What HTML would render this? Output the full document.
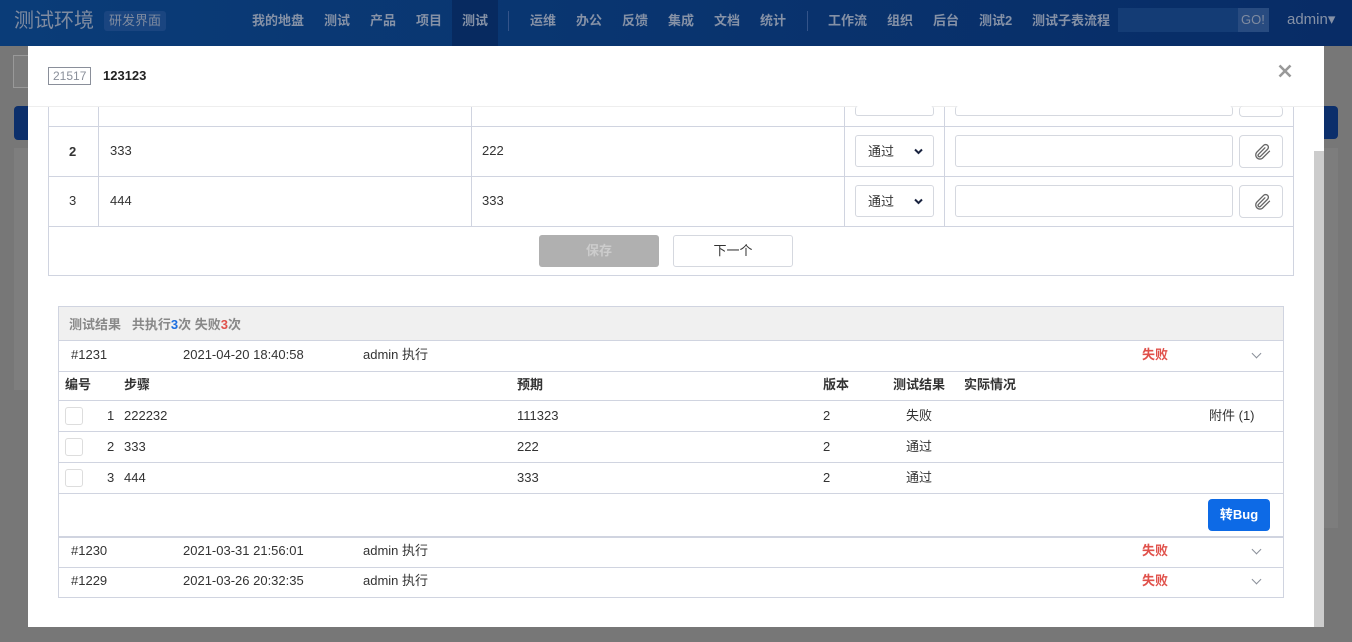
<!DOCTYPE html>
<html style="background:#777"><head><meta charset="utf-8"><style>
*{box-sizing:border-box;margin:0;padding:0}
html,body{width:1352px;height:642px;overflow:hidden;background:#777}
body{font-family:"Liberation Sans","Noto Sans CJK SC",sans-serif;font-size:13px;color:#333;position:relative}
.a{position:absolute}
.bg{left:0;top:0;width:1352px;height:642px;background:#777}
.nav{left:0;top:0;width:1352px;height:46px;background:linear-gradient(90deg,#0a3c78,#082c66)}
.nav span{position:absolute;top:13px;color:#8591a6;font-weight:bold;font-size:13px;line-height:16px}
.modal{left:28px;top:46px;width:1296px;height:581px;background:#fff;overflow:hidden}
.bd{border:1px solid #d0d4e0}
.sel{background:#fff;border:1px solid #d5d8df;border-radius:3px;height:32px;width:79px;font-size:13px;padding:8px 12px;line-height:16px}
.ta{background:#fff;border:1px solid #d5d8df;border-radius:3px;height:32px;width:278px}
.clip{border:1px solid #d5d8df;border-radius:4px;width:44px;height:33px}
.t{position:absolute;font-size:13px;color:#333;line-height:16px}
.hl{position:absolute;left:0;width:1225px;height:1px;background:#d0d4e0}
.cb{position:absolute;left:6px;width:18px;height:18px;border:1.5px solid #ddd;border-radius:3px}
.fail{color:#e0504a;font-weight:bold}
.chev{position:absolute;left:1194px;width:7px;height:7px;border-right:1.5px solid #8a8f99;border-bottom:1.5px solid #8a8f99;transform:rotate(45deg)}
</style></head><body>
<div class="a bg"></div>
<div class="a nav">
<span style="left:14px;top:9px;font-size:20px;line-height:24px;font-weight:normal;color:#7f8ba0">测试环境</span>
<span style="left:104px;top:11px;font-size:13px;font-weight:normal;background:#1a4580;padding:2px 5px;border-radius:3px;color:#7f8ba0">研发界面</span>
<div class="a" style="left:452px;top:0;width:46px;height:46px;background:#072a60"></div>
<span style="left:252px">我的地盘</span><span style="left:324px">测试</span><span style="left:370px">产品</span><span style="left:416px">项目</span><span style="left:462px">测试</span>
<div class="a" style="left:508px;top:11px;width:1px;height:20px;background:#34548a"></div>
<span style="left:530px">运维</span><span style="left:576px">办公</span><span style="left:622px">反馈</span><span style="left:668px">集成</span><span style="left:714px">文档</span><span style="left:760px">统计</span>
<div class="a" style="left:807px;top:11px;width:1px;height:20px;background:#34548a"></div>
<span style="left:828px">工作流</span><span style="left:887px">组织</span><span style="left:933px">后台</span><span style="left:979px">测试2</span><span style="left:1032px">测试子表流程</span>
<div class="a" style="left:1118px;top:8px;width:120px;height:24px;background:#143c75"></div>
<div class="a" style="left:1238px;top:8px;width:31px;height:24px;background:#284b80;color:#7f8ba0;font-size:13px;padding:5px 3px;line-height:14px">GO!</div>
<span style="left:1287px;top:12px;font-weight:normal;font-size:15px">admin▾</span>
</div>
<div class="a" style="left:13px;top:55px;width:15px;height:33px;border:1px solid #999;border-right:none;background:#7c7c7c"></div>
<div class="a" style="left:14px;top:106px;width:14px;height:34px;background:#0c2f6b;border-radius:4px 0 0 4px"></div>
<div class="a" style="left:14px;top:148px;width:14px;height:242px;background:#7e7e7e"></div>
<div class="a" style="left:1324px;top:106px;width:14px;height:33px;background:#0c2f6b;border-radius:0 4px 4px 0"></div>
<div class="a" style="left:1324px;top:148px;width:14px;height:380px;background:#7d7d7d"></div>
<div class="a modal">
<!-- steps table -->
<div class="a bd" style="left:20px;top:50px;width:1246px;height:180px;border-top:none"></div>
<div class="a" style="left:20px;top:80px;width:1246px;height:1px;background:#d0d4e0"></div>
<div class="a" style="left:20px;top:130px;width:1246px;height:1px;background:#d0d4e0"></div>
<div class="a" style="left:20px;top:180px;width:1246px;height:1px;background:#d0d4e0"></div>
<div class="a" style="left:70px;top:60px;width:1px;height:120px;background:#d0d4e0"></div>
<div class="a" style="left:443px;top:60px;width:1px;height:120px;background:#d0d4e0"></div>
<div class="a" style="left:816px;top:60px;width:1px;height:120px;background:#d0d4e0"></div>
<div class="a" style="left:916px;top:60px;width:1px;height:120px;background:#d0d4e0"></div>
<div class="a" style="left:0;top:0;width:1296px;height:60px;background:#fff"></div>
<div class="a" style="left:20px;top:21px;border:1px solid #8a8f9a;color:#8a8f9a;font-size:12px;padding:1px 4px;line-height:14px">21517</div>
<div class="a" style="left:75px;top:22px;font-weight:bold;color:#222;font-size:13px;line-height:16px">123123</div>
<svg class="a" style="left:1250px;top:18px" width="14" height="14" viewBox="0 0 14 14"><path d="M1.5 1.5L12.5 12.5M12.5 1.5L1.5 12.5" stroke="#999" stroke-width="2.6"/></svg>
<div class="a" style="left:0;top:60px;width:1296px;height:1px;background:#eee"></div>
<div class="a sel" style="left:827px;top:60px;height:10px;border-top:none;padding:0"></div>
<div class="a ta" style="left:927px;top:60px;height:10px;border-top:none"></div>
<div class="a clip" style="left:1211px;top:60px;height:11px;border-top:none"></div>
<div class="t" style="left:41px;top:98px;font-weight:bold">2</div>
<div class="t" style="left:82px;top:97px">333</div><div class="t" style="left:454px;top:97px">222</div>
<div class="a sel" style="left:827px;top:89px">通过<svg style="position:absolute;right:10px;top:12px" width="9" height="7" viewBox="0 0 9 7"><path d="M1 1.5L4.5 5L8 1.5" fill="none" stroke="#1a2440" stroke-width="2"/></svg></div>
<div class="a ta" style="left:927px;top:89px"></div>
<div class="a clip" style="left:1211px;top:89px"><svg style="position:absolute;left:12px;top:6px" width="20" height="20" viewBox="0 0 24 24"><path d="M21 11l-8.5 8.5a5 5 0 0 1-7-7L14 4a3.3 3.3 0 0 1 4.7 4.7l-8.6 8.6a1.7 1.7 0 0 1-2.4-2.4L15.5 7" fill="none" stroke="#666" stroke-width="1.6" stroke-linecap="round"/></svg></div>
<div class="t" style="left:41px;top:147px">3</div>
<div class="t" style="left:82px;top:147px">444</div><div class="t" style="left:454px;top:147px">333</div>
<div class="a sel" style="left:827px;top:139px">通过<svg style="position:absolute;right:10px;top:12px" width="9" height="7" viewBox="0 0 9 7"><path d="M1 1.5L4.5 5L8 1.5" fill="none" stroke="#1a2440" stroke-width="2"/></svg></div>
<div class="a ta" style="left:927px;top:139px"></div>
<div class="a clip" style="left:1211px;top:139px"><svg style="position:absolute;left:12px;top:6px" width="20" height="20" viewBox="0 0 24 24"><path d="M21 11l-8.5 8.5a5 5 0 0 1-7-7L14 4a3.3 3.3 0 0 1 4.7 4.7l-8.6 8.6a1.7 1.7 0 0 1-2.4-2.4L15.5 7" fill="none" stroke="#666" stroke-width="1.6" stroke-linecap="round"/></svg></div>
<div class="a" style="left:511px;top:189px;width:120px;height:32px;background:#b0b0b0;border-radius:3px;color:#ccc;font-weight:bold;text-align:center;line-height:32px">保存</div>
<div class="a" style="left:645px;top:189px;width:120px;height:32px;border:1px solid #d5d8df;border-radius:3px;text-align:center;line-height:30px">下一个</div>
<!-- results -->
<div class="a bd" style="left:30px;top:260px;width:1226px;height:292px">
<div class="a" style="left:0;top:0;width:1224px;height:34px;background:#f0f0f0;border-bottom:1px solid #d0d4e0"></div>
<div class="t" style="left:10px;top:10px;font-weight:bold;color:#888">测试结果 &nbsp; 共执行<span style="color:#1a6de0">3</span>次 失败<span style="color:#e0504a">3</span>次</div>
<div class="t" style="left:12px;top:40px">#1231</div><div class="t" style="left:124px;top:40px">2021-04-20 18:40:58</div><div class="t" style="left:304px;top:40px">admin 执行</div>
<div class="t fail" style="left:1083px;top:40px">失败</div><div class="chev" style="top:43px"></div>
<div class="hl" style="top:64px"></div>
<div class="t" style="left:6px;top:70px;font-weight:bold">编号</div><div class="t" style="left:65px;top:70px;font-weight:bold">步骤</div><div class="t" style="left:458px;top:70px;font-weight:bold">预期</div><div class="t" style="left:764px;top:70px;font-weight:bold">版本</div><div class="t" style="left:834px;top:70px;font-weight:bold">测试结果</div><div class="t" style="left:905px;top:70px;font-weight:bold">实际情况</div>
<div class="hl" style="top:93px"></div>
<div class="cb" style="top:100px"></div><div class="t" style="left:48px;top:101px">1</div><div class="t" style="left:65px;top:101px">222232</div><div class="t" style="left:458px;top:101px">111323</div><div class="t" style="left:764px;top:101px">2</div><div class="t" style="left:847px;top:101px">失败</div><div class="t" style="left:1150px;top:101px">附件 (1)</div>
<div class="hl" style="top:124px"></div>
<div class="cb" style="top:131px"></div><div class="t" style="left:48px;top:132px">2</div><div class="t" style="left:65px;top:132px">333</div><div class="t" style="left:458px;top:132px">222</div><div class="t" style="left:764px;top:132px">2</div><div class="t" style="left:847px;top:132px">通过</div>
<div class="hl" style="top:155px"></div>
<div class="cb" style="top:162px"></div><div class="t" style="left:48px;top:163px">3</div><div class="t" style="left:65px;top:163px">444</div><div class="t" style="left:458px;top:163px">333</div><div class="t" style="left:764px;top:163px">2</div><div class="t" style="left:847px;top:163px">通过</div>
<div class="hl" style="top:186px"></div>
<div class="a" style="left:1149px;top:192px;width:62px;height:32px;background:#0d6ae6;border-radius:4px;color:#fff;font-weight:bold;text-align:center;line-height:32px">转Bug</div>
<div class="hl" style="top:229px;height:2px"></div>
<div class="t" style="left:12px;top:236px">#1230</div><div class="t" style="left:124px;top:236px">2021-03-31 21:56:01</div><div class="t" style="left:304px;top:236px">admin 执行</div>
<div class="t fail" style="left:1083px;top:236px">失败</div><div class="chev" style="top:239px"></div>
<div class="hl" style="top:260px"></div>
<div class="t" style="left:12px;top:266px">#1229</div><div class="t" style="left:124px;top:266px">2021-03-26 20:32:35</div><div class="t" style="left:304px;top:266px">admin 执行</div>
<div class="t fail" style="left:1083px;top:266px">失败</div><div class="chev" style="top:269px"></div>
</div>
<div class="a" style="left:1286px;top:105px;width:10px;height:476px;background:#ccc"></div>
</div>
</body></html>
